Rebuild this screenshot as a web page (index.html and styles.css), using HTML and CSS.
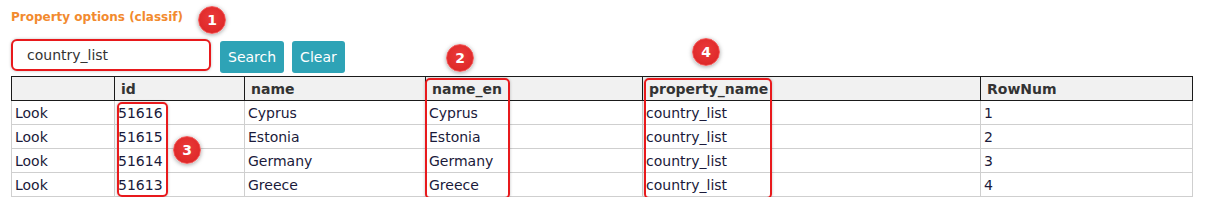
FILE: index.html
```html
<!DOCTYPE html>
<html>
<head>
<meta charset="utf-8">
<link rel="stylesheet" href="styles.css">
</head>
<body>
<div class="page">
  <h1 class="title">Property options (classif)</h1>
  <div class="toolbar">
    <input class="search-input" type="text" value="country_list">
    <button class="btn">Search</button>
    <button class="btn">Clear</button>
  </div>
  <table class="grid">
    <colgroup>
      <col class="c1"><col class="c2"><col class="c3"><col class="c4"><col class="c5"><col class="c6">
    </colgroup>
    <thead>
      <tr><th></th><th>id</th><th>name</th><th>name_en</th><th>property_name</th><th>RowNum</th></tr>
    </thead>
    <tbody>
      <tr><td>Look</td><td>51616</td><td>Cyprus</td><td>Cyprus</td><td>country_list</td><td>1</td></tr>
      <tr><td>Look</td><td>51615</td><td>Estonia</td><td>Estonia</td><td>country_list</td><td>2</td></tr>
      <tr><td>Look</td><td>51614</td><td>Germany</td><td>Germany</td><td>country_list</td><td>3</td></tr>
      <tr><td>Look</td><td>51613</td><td>Greece</td><td>Greece</td><td>country_list</td><td>4</td></tr>
    </tbody>
  </table>

  <div class="mark mark-id"></div>
  <div class="mark mark-name-en"></div>
  <div class="mark mark-prop"></div>

  <div class="badge badge-1">1</div>
  <div class="badge badge-2">2</div>
  <div class="badge badge-3">3</div>
  <div class="badge badge-4">4</div>
</div>
</body>
</html>
```

FILE: styles.css
```css
html, body {
  margin: 0;
  padding: 0;
  background: #ffffff;
}

.page {
  position: relative;
  padding: 9px 11px 0 11px;
  font-family: "DejaVu Sans", Verdana, sans-serif;
  color: #1a1a3a;
}

.title {
  margin: 0;
  font-size: 12px;
  line-height: 16px;
  font-weight: bold;
  color: #f28a2e;
}

.toolbar {
  display: flex;
  align-items: flex-start;
  margin-top: 14px;
  height: 37px;
}

.search-input {
  box-sizing: border-box;
  width: 200px;
  height: 32px;
  margin: 0 9px 0 0;
  padding: 0 14px;
  border: 2px solid #e8191c;
  border-radius: 6px;
  box-shadow: 0 0 3px rgba(0, 0, 0, 0.25);
  font-family: "DejaVu Sans", Verdana, sans-serif;
  font-size: 14px;
  color: #333333;
  outline: none;
}

.btn {
  box-sizing: border-box;
  height: 32px;
  margin-top: 2px;
  margin-right: 8px;
  padding: 0 8px;
  border: none;
  border-radius: 3px;
  background: #2ea3b6;
  color: #ffffff;
  font-family: "DejaVu Sans", Verdana, sans-serif;
  font-size: 14px;
}

.grid {
  border-collapse: collapse;
  table-layout: fixed;
  width: 1181px;
  font-size: 14px;
}

.c1 { width: 103px; }
.c2 { width: 130px; }
.c3 { width: 181px; }
.c4 { width: 217px; }
.c5 { width: 338px; }
.c6 { width: 212px; }

.grid th {
  height: 23px;
  padding: 0 6px;
  text-align: left;
  font-weight: bold;
  color: #333333;
  background: #f1f1f1;
  border: 1px solid #1a1a1a;
}

.grid td {
  height: 23px;
  padding: 0 3px;
  border: 1px solid #cfcfcf;
  color: #1a1a3a;
  white-space: nowrap;
}

.grid tbody tr:first-child td {
  border-top-color: #1a1a1a;
}

.mark {
  position: absolute;
  box-sizing: border-box;
  border: 2px solid #e8191c;
  border-radius: 5px;
  box-shadow: 0 0 3px rgba(0, 0, 0, 0.25);
}

.mark-id { left: 117px; top: 102px; width: 51px; height: 95px; }
.mark-name-en { left: 425px; top: 78px; width: 85px; height: 121px; }
.mark-prop { left: 644px; top: 78px; width: 128px; height: 121px; }

.badge {
  position: absolute;
  box-sizing: border-box;
  width: 28px;
  height: 28px;
  border-radius: 50%;
  border: 1px solid #f25a5a;
  background: radial-gradient(circle at 50% 40%, #ea3a3a 0%, #e02b2b 65%, #d42020 100%);
  box-shadow: 0 1px 4px rgba(0, 0, 0, 0.35);
  color: #ffffff;
  font-family: "DejaVu Sans", Verdana, sans-serif;
  font-size: 14px;
  font-weight: bold;
  line-height: 26px;
  text-align: center;
}

.badge-1 { left: 198px; top: 6px; }
.badge-2 { left: 446px; top: 44px; }
.badge-3 { left: 173px; top: 136px; }
.badge-4 { left: 692px; top: 38px; }
```
